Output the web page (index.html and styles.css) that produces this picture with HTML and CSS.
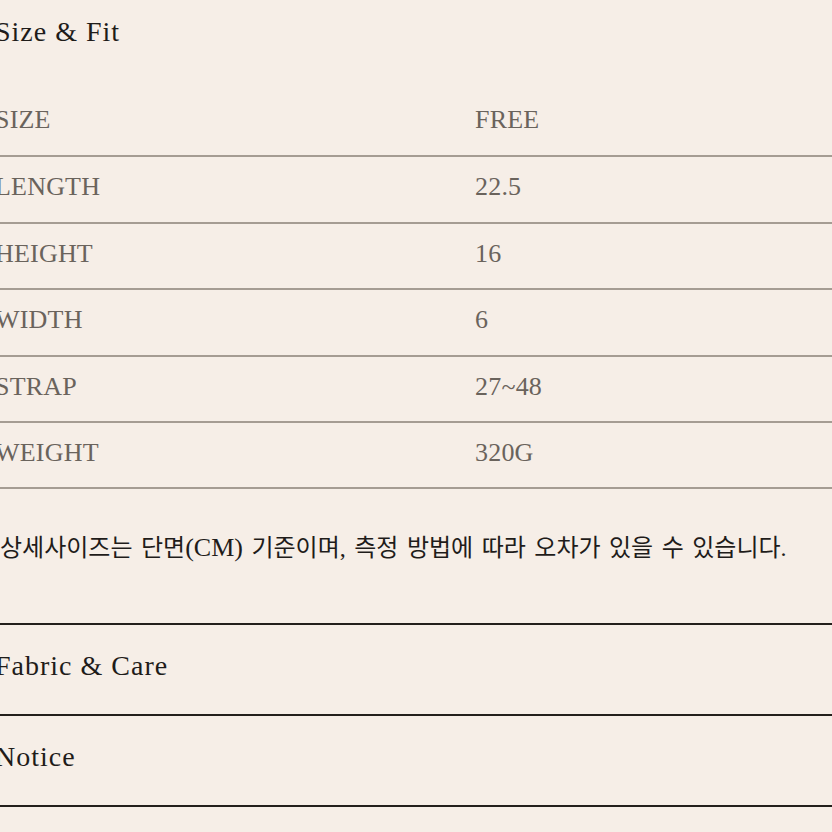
FILE: index.html
```html
<!DOCTYPE html>
<html lang="ko">
<head>
<meta charset="utf-8">
<link rel="stylesheet" href="styles.css">
</head>
<body>
<div class="page">
  <section class="size-fit">
    <h2 class="title">Size &amp; Fit</h2>
    <div class="table">
      <div class="row first"><span class="k">SIZE</span><span class="v">FREE</span></div>
      <div class="row"><span class="k">LENGTH</span><span class="v">22.5</span></div>
      <div class="row"><span class="k">HEIGHT</span><span class="v">16</span></div>
      <div class="row"><span class="k">WIDTH</span><span class="v">6</span></div>
      <div class="row"><span class="k">STRAP</span><span class="v">27~48</span></div>
      <div class="row last"><span class="k">WEIGHT</span><span class="v">320G</span></div>
    </div>
    <p class="note">상세사이즈는 단면<span class="lat">(CM)</span> 기준이며, 측정 방법에 따라 오차가 있을 수 있습니다.</p>
  </section>
  <div class="acc">
    <div class="acc-item">Fabric &amp; Care</div>
    <div class="acc-item">Notice</div>
  </div>
</div>
</body>
</html>
```
FILE: styles.css
```css
html, body {
  margin: 0;
  padding: 0;
  background: #f6eee7;
}
body {
  font-family: "Liberation Serif", "Noto Sans CJK KR", serif;
  color: #1f1c1a;
  overflow: hidden;
}
.page {
  margin-left: -5px;
  width: 860px;
}
.title {
  margin: 0;
  padding-top: 14px;
  font-size: 28px;
  font-weight: normal;
  letter-spacing: 1px;
  line-height: 36px;
  color: #1f1c1a;
}
.table {
  margin-top: 52px;
}
.row {
  display: flex;
  font-size: 26px;
  line-height: 36px;
  color: #6a635c;
  letter-spacing: 0.2px;
  padding: 12px 0 16.4px;
  border-top: 2px solid #a59c93;
}
.row.first {
  border-top: none;
  padding-top: 0;
  padding-bottom: 17.4px;
}
.row.last {
  border-bottom: 2px solid #a59c93;
}
.k {
  width: 480px;
}
.note {
  margin: 42px 0 0;
  font-size: 24px;
  word-spacing: 2.5px;
  line-height: 34px;
  color: #1f1c1a;
  padding-left: 5px;
}
.lat {
  font-size: 26px;
  line-height: 1;
}
.acc {
  margin-top: 58px;
  border-top: 2px solid #231f1c;
}
.acc-item {
  font-size: 28px;
  letter-spacing: 1px;
  line-height: 36px;
  padding: 23px 0 30px;
  border-bottom: 2px solid #231f1c;
}
```
